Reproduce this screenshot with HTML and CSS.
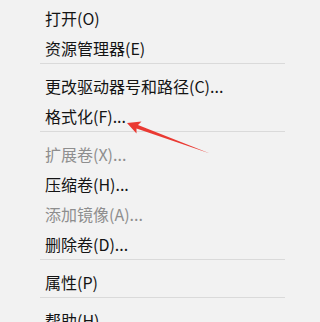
FILE: index.html
```html
<!DOCTYPE html>
<html lang="zh-CN">
<head>
<meta charset="utf-8">
<title>磁盘菜单</title>
<link rel="stylesheet" href="styles.css">
</head>
<body>
<div class="menu">
  <div class="item">打开(O)</div>
  <div class="item">资源管理器(E)</div>
  <div class="sep"></div>
  <div class="item">更改驱动器号和路径(C)...</div>
  <div class="item">格式化(F)...</div>
  <div class="sep"></div>
  <div class="item disabled">扩展卷(X)...</div>
  <div class="item">压缩卷(H)...</div>
  <div class="item disabled">添加镜像(A)...</div>
  <div class="item">删除卷(D)...</div>
  <div class="sep"></div>
  <div class="item">属性(P)</div>
  <div class="sep"></div>
  <div class="item">帮助(H)</div>
  <svg class="arrow" width="285" height="322" viewBox="0 0 285 322">
    <polygon points="127,123 141.5,121.5 138,125 210,153.5 136.5,128.5 136.5,133.5" fill="#ea3a33"/>
  </svg>
</div>
</body>
</html>
```
FILE: styles.css
```css
html, body {
  margin: 0;
  padding: 0;
  background: #f2f2f2;
}
body {
  width: 285px;
  height: 322px;
  overflow: hidden;
}
.menu {
  position: relative;
  padding-top: 3px;
  font-family: "Noto Sans CJK SC", "Noto Sans", sans-serif;
  font-size: 16px;
  color: #141414;
}
.item {
  height: 30px;
  line-height: 30px;
  padding-left: 45px;
  white-space: nowrap;
}
.item.disabled {
  color: #8e8e8e;
}
.sep {
  height: 1px;
  background: #dadada;
  margin-left: 40px;
  margin-bottom: 7px;
}
.arrow {
  position: absolute;
  left: 0;
  top: 0;
}
```
